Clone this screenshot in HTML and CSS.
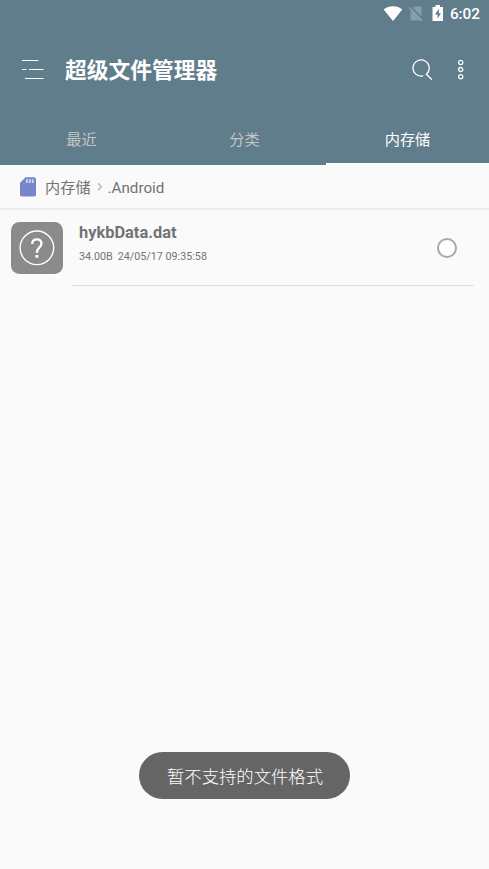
FILE: index.html
```
<!DOCTYPE html>
<html lang="zh-CN">
<head>
<meta charset="utf-8">
<title>超级文件管理器</title>
<link rel="stylesheet" href="styles.css">
</head>
<body>
<header class="header">
  <div class="status">
    <svg class="wifi" width="20" height="16" viewBox="0 0 20 16"><path d="M.7 3.500C6-.9 14-.9 19.300 3.500L10 15z" fill="#fff"/></svg>
    <svg class="sim" width="16" height="18" viewBox="0 0 16 18"><path d="M6 1.500h7.500V15.500H2.500V6z" fill="#869da7"/><path d="M2 2l13 13" stroke="#607d8b" stroke-width="2.500"/><path d="M1.300 2.500l13 13.500" stroke="#93a7b1" stroke-width="1.200"/></svg>
    <svg class="battery" width="12" height="17" viewBox="0 0 12 17"><path d="M3.500 0h4.500v2H11v14H.5V2h3z" fill="#fff"/><path d="M6.800 3.800L3 9.600h2.600v4l3.400-5.400H6.800z" fill="#607d8b"/></svg>
    <span class="clock">6:02</span>
  </div>
  <div class="toolbar">
    <svg class="menu" width="24" height="22" viewBox="0 0 24 22" stroke="#fff" stroke-width="1.200" stroke-linecap="round"><path d="M1.500 1.500h15.500M1.500 10.500h3.500M8.500 10.500h13.500M4.500 19.500h17.500"/></svg>
    <h1 class="title">超级文件管理器</h1>
    <svg class="search" width="22" height="22" viewBox="0 0 22 22" fill="none" stroke="#fff" stroke-width="1.300" stroke-linecap="round"><path d="M10.700 17A8.100 8.100 0 1 1 14.400 15.200L19.500 20.200"/></svg>
    <svg class="more" width="8" height="22" viewBox="0 0 8 22" fill="none" stroke="#fff" stroke-width="1.300"><circle cx="3.700" cy="3.500" r="2.100"/><circle cx="3.700" cy="10.600" r="2.100"/><circle cx="3.700" cy="17.700" r="2.100"/></svg>
  </div>
  <nav class="tabs">
    <div class="tab">最近</div>
    <div class="tab">分类</div>
    <div class="tab active">内存储</div>
  </nav>
</header>
<div class="path">
  <svg class="card" width="16" height="20" viewBox="0 0 16 20"><path d="M5.500.2H14a2 2 0 0 1 2 2V17.700a1.800 1.800 0 0 1-1.800 1.800H1.800A1.800 1.800 0 0 1 0 17.700V5.700z" fill="#7986cb"/><path d="M6.900 2.200v3.800M9.800 2.200v3.800M12.700 2.200v3.800" stroke="#d5daf0" stroke-width="1.700"/></svg>
  <span class="crumb root">内存储</span>
  <svg class="chevron" width="6" height="10" viewBox="0 0 6 10" fill="none" stroke="#b8b8b8" stroke-width="1.500"><path d="M1 1.300l3.300 3.500L1 8.300"/></svg>
  <span class="crumb">.Android</span>
</div>
<main class="list">
  <div class="file">
    <svg class="thumb" width="52" height="52" viewBox="0 0 52 52" fill="none" stroke="#fff"><rect width="52" height="52" rx="8.500" fill="#8b8b8b" stroke="none"/><circle cx="25.900" cy="25.800" r="16.800" stroke-width="1.400"/><path d="M21.200 22c0-2.900 1.900-4.600 4.600-4.600s4.600 1.700 4.600 4.300c0 2.100-1.300 3.200-2.600 4.500-1.300 1.200-1.900 2.200-1.900 4.600" stroke-width="2.400"/><path d="M24.500 33h2.800v2.800h-2.800z" fill="#fff" stroke="none"/></svg>
    <div class="details">
      <div class="info">
        <div class="name">hykbData.dat</div>
        <div class="meta"><span>34.00B</span><span>24/05/17 09:35:58</span></div>
      </div>
      <span class="radio"></span>
    </div>
  </div>
</main>
<div class="toast">暂不支持的文件格式</div>
</body>
</html>
```
FILE: styles.css
```
* { box-sizing: border-box; }
body {
  margin: 0;
  height: 869px;
  overflow: hidden;
  background: #fafafa;
  color: #737373;
  font-family: Roboto, "Noto Sans CJK SC", sans-serif;
}
svg { display: block; flex: none; }
.header { height: 165px; background: #607d8b; color: #fff; }
.status {
  display: flex;
  align-items: center;
  justify-content: flex-end;
  height: 27px;
  padding-right: 9px;
}
.wifi { margin-right: 5px; }
.sim { margin-right: 8px; }
.battery { margin-right: 6px; }
.clock { padding-top: 2px; font-size: 15.300px; line-height: 25px; font-weight: 500; }
.toolbar {
  display: flex;
  align-items: center;
  height: 86px;
  padding: 0 24px 0 21px;
}
.title {
  flex: 1;
  margin: 0 0 0 20px;
  padding-top: 2px;
  font-size: 21.75px;
  line-height: 32px;
  font-weight: 700;
}
.search { margin-right: 23px; }
.tabs { display: grid; grid-template-columns: repeat(3, 1fr); height: 52px; }
.tab {
  padding-top: 5px;
  color: #c5c5c5;
  font-size: 15.2px;
  line-height: 45px;
  text-align: center;
}
.active { color: #fff; border-bottom: 2px solid #fff; }
.path {
  display: flex;
  align-items: center;
  height: 45px;
  padding-left: 20px;
  border-bottom: 2px solid #ebebeb;
}
.crumb { padding-top: 2px; font-size: 15.2px; line-height: 22px; }
.root { margin-left: 9px; }
.chevron { margin: 0 5px 0 6px; }
.file { display: flex; height: 76px; padding: 12px 15px 0 11px; }
.details {
  display: flex;
  flex: 1;
  margin-left: 8px;
  padding-left: 8px;
  border-bottom: 1px solid #e0e0e0;
}
.info { flex: 1; }
.name { font-size: 16.4px; line-height: 22px; font-weight: 700; }
.meta {
  display: flex;
  gap: 5px;
  margin-top: 5px;
  font-size: 10.75px;
  line-height: 16px;
}
.radio {
  width: 20px;
  height: 20px;
  margin: 16px 17px 0 0;
  border: 2px solid #a8a8a8;
  border-radius: 50%;
  background: #fff;
}
.toast {
  position: absolute;
  left: 139px;
  top: 752px;
  width: 211px;
  height: 47px;
  padding-left: 1px;
  border-radius: 24px;
  background: #656565;
  color: #fff;
  font-size: 17.35px;
  font-weight: 300;
  line-height: 50px;
  text-align: center;
}
```
